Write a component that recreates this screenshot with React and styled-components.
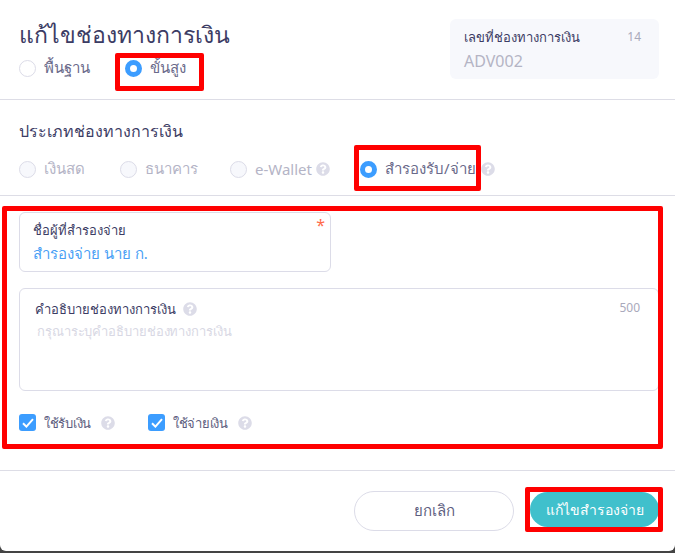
import React from "react"
import styled, { createGlobalStyle } from "styled-components"
import { FaQuestionCircle } from "react-icons/fa"

const GlobalStyle = createGlobalStyle`
  html, body {
    margin: 0;
    padding: 0;
    background: #444;
  }

  * {
    box-sizing: border-box;
  }
`

const Modal = styled.div`
  position: relative;
  width: 675px;
  height: 551px;
  background: #fff;
  border-radius: 0 0 6px 6px;
  font-family: "Noto Sans", "Open Sans", sans-serif;
  color: #3c3c64;
  overflow: hidden;
`

const Header = styled.header`
  height: 100px;
  padding: 18px 16px 0 19px;
  border-bottom: 1px solid #dddde6;
  display: flex;
  justify-content: space-between;
`

const Title = styled.h1`
  margin: 0;
  font-size: 23px;
  line-height: 32px;
  font-weight: 400;
`

const CodeBox = styled.div`
  width: 209px;
  height: 60px;
  margin-top: 1px;
  padding: 8px 18px 0 14px;
  background: #f7f8fc;
  border-radius: 6px;
`

const CodeTop = styled.div`
  display: flex;
  justify-content: space-between;
  font-size: 13px;
  line-height: 20px;
`

const Counter = styled.span`
  font-size: 12px;
  color: #a9a9bb;
`

const CodeValue = styled.div`
  margin-top: 3px;
  font-size: 16px;
  line-height: 22px;
  color: #b4b4c4;
`

const TypeSection = styled.section`
  height: 96px;
  padding: 20px 19px 0;
  border-bottom: 1px solid #dddde6;
`

const SubTitle = styled.h2`
  margin: 0;
  font-size: 16px;
  line-height: 22px;
  font-weight: 400;
`

const RadioRow = styled.div`
  display: flex;
  margin-top: ${(p) => p.$top || 0}px;
`

const RadioItem = styled.label`
  width: ${(p) => p.$width}px;
  display: flex;
  align-items: center;
  gap: 8px;
  height: 22px;
  font-size: 15px;
  color: ${(p) => (p.$muted ? "#b4b4c6" : "#6a6a8a")};
`

const Radio = styled.span`
  flex: none;
  width: 17px;
  height: 17px;
  border-radius: 50%;
  border: ${(p) => (p.$on ? "5px solid #3c9dff" : "1px solid #dcdce8")};
  background: ${(p) => (p.$on ? "#fff" : p.$muted ? "#f7f8fc" : "#fff")};
`

const Help = styled(FaQuestionCircle)`
  flex: none;
  width: 14px;
  height: 14px;
  color: #dcdce8;
  margin-left: ${(p) => p.$left || 0}px;
`

const Form = styled.section`
  height: 275px;
  padding: 16px 16px 0 19px;
  border-bottom: 1px solid #dddde6;
`

const Field = styled.div`
  position: relative;
  width: ${(p) => p.$width};
  height: ${(p) => p.$height}px;
  margin-bottom: 16px;
  padding: ${(p) => p.$padding};
  border: 1px solid #dcdce8;
  border-radius: 6px;
`

const FieldLabel = styled.div`
  display: flex;
  align-items: center;
  gap: 7px;
  font-size: 13px;
  line-height: 20px;
`

const Star = styled.span`
  position: absolute;
  top: 1px;
  right: 5px;
  font-size: 16px;
  color: #ff6b4a;
`

const FieldValue = styled.div`
  margin-top: 2px;
  font-size: 15px;
  line-height: 22px;
  color: #4a9ff5;
`

const Placeholder = styled.div`
  margin: 2px 0 0 2px;
  font-size: 13px;
  letter-spacing: -0.1px;
  line-height: 20px;
  color: #d8d8e4;
`

const FieldCounter = styled(Counter)`
  position: absolute;
  top: 10px;
  right: 18px;
`

const CheckRow = styled.div`
  display: flex;
  margin-top: 21px;
`

const CheckItem = styled.label`
  width: ${(p) => p.$width}px;
  display: flex;
  align-items: center;
  gap: 8px;
  font-size: 13px;
  letter-spacing: -0.3px;
  line-height: 19px;
  color: #5e5e80;
`

const CheckText = styled.span`
  padding-top: 2px;
`

const Box = styled.span`
  flex: none;
  width: 17px;
  height: 17px;
  border-radius: 3px;
  background: #3c9dff;
  display: flex;
  align-items: center;
  justify-content: center;
`

const Footer = styled.footer`
  padding: 20px 16px 0 0;
  display: flex;
  justify-content: flex-end;
  gap: 16px;
`

const Button = styled.button`
  height: ${(p) => (p.$primary ? 35 : 40)}px;
  width: ${(p) => (p.$primary ? 129 : 160)}px;
  margin-top: ${(p) => (p.$primary ? 1 : 0)}px;
  border-radius: 20px;
  border: ${(p) => (p.$primary ? "none" : "1px solid #dcdce8")};
  background: ${(p) => (p.$primary ? "#40c0cc" : "#fff")};
  color: ${(p) => (p.$primary ? "#fff" : "#5e5e80")};
  font-family: inherit;
  font-size: ${(p) => (p.$primary ? 14 : 15)}px;
  padding: 0;
`

const Highlight = styled.div`
  position: absolute;
  left: ${(p) => p.$x}px;
  top: ${(p) => p.$y}px;
  width: ${(p) => p.$w}px;
  height: ${(p) => p.$h}px;
  border: ${(p) => p.$b || 4}px solid #f00;
  border-radius: 2px;
  pointer-events: none;
`

const CheckMark = () => (
  <svg width="12" height="10" viewBox="0 0 12 10" fill="none">
    <path d="M1 5.2L4.4 8.6L11 1.2" stroke="#fff" strokeWidth="2" />
  </svg>
)

export default function App() {
  return (
    <>
      <GlobalStyle />
      <Modal>
        <Header>
          <div>
            <Title>แก้ไขช่องทางการเงิน</Title>
            <RadioRow $top={7}>
              <RadioItem $width={106}>
                <Radio />
                พื้นฐาน
              </RadioItem>
              <RadioItem $width={90}>
                <Radio $on />
                ขั้นสูง
              </RadioItem>
            </RadioRow>
          </div>
          <CodeBox>
            <CodeTop>
              เลขที่ช่องทางการเงิน
              <Counter>14</Counter>
            </CodeTop>
            <CodeValue>ADV002</CodeValue>
          </CodeBox>
        </Header>

        <TypeSection>
          <SubTitle>ประเภทช่องทางการเงิน</SubTitle>
          <RadioRow $top={16}>
            <RadioItem $width={101} $muted>
              <Radio $muted />
              เงินสด
            </RadioItem>
            <RadioItem $width={110} $muted>
              <Radio $muted />
              ธนาคาร
            </RadioItem>
            <RadioItem $width={130} $muted>
              <Radio $muted />
              e-Wallet
              <Help $left={-4} />
            </RadioItem>
            <RadioItem $width={140}>
              <Radio $on />
              สำรองรับ/จ่าย
              <Help $left={-3} />
            </RadioItem>
          </RadioRow>
        </TypeSection>

        <Form>
          <Field $width="312px" $height={60} $padding="7px 13px">
            <FieldLabel>ชื่อผู้ที่สำรองจ่าย</FieldLabel>
            <Star>*</Star>
            <FieldValue>สำรองจ่าย นาย ก.</FieldValue>
          </Field>
          <Field $width="640px" $height={103} $padding="10px 15px">
            <FieldLabel>
              คำอธิบายช่องทางการเงิน
              <Help />
            </FieldLabel>
            <FieldCounter>500</FieldCounter>
            <Placeholder>กรุณาระบุคำอธิบายช่องทางการเงิน</Placeholder>
          </Field>
          <CheckRow>
            <CheckItem $width={129}>
              <Box>
                <CheckMark />
              </Box>
              <CheckText>ใช้รับเงิน</CheckText>
              <Help $left={2} />
            </CheckItem>
            <CheckItem $width={130}>
              <Box>
                <CheckMark />
              </Box>
              <CheckText>ใช้จ่ายเงิน</CheckText>
              <Help $left={2} />
            </CheckItem>
          </CheckRow>
        </Form>

        <Footer>
          <Button>ยกเลิก</Button>
          <Button $primary>แก้ไขสำรองจ่าย</Button>
        </Footer>

        <Highlight $x={115} $y={53} $w={89} $h={38} $b={5} />
        <Highlight $x={354} $y={145} $w={127} $h={46} $b={5} />
        <Highlight $x={2} $y={206} $w={661} $h={243} $b={5} />
        <Highlight $x={525} $y={487} $w={138} $h={45} $b={5} />
      </Modal>
    </>
  )
}
